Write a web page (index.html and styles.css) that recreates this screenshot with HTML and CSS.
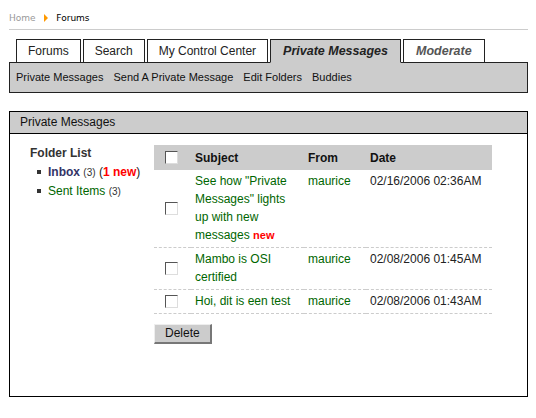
FILE: index.html
```html
<!DOCTYPE html>
<html lang="en">

<head>
    <meta charset="UTF-8">
    <title>Forums - Private Messages</title>
    <link rel="stylesheet" href="styles.css">
</head>

<body>
    <div class="page">
        <div class="crumbs">
            <a href="#" class="crumb-home">Home</a>
            <span class="crumb-arrow"></span>
            <span class="crumb-here">Forums</span>
        </div>

        <ul class="tabs">
            <li>Forums</li>
            <li>Search</li>
            <li>My Control Center</li>
            <li class="active">Private Messages</li>
            <li class="special">Moderate</li>
        </ul>
        <div class="subnav">
            <a href="#">Private Messages</a>
            <a href="#">Send A Private Message</a>
            <a href="#">Edit Folders</a>
            <a href="#">Buddies</a>
        </div>

        <div class="panel">
            <div class="panel-head">Private Messages</div>
            <div class="panel-body">
                <div class="folders">
                    <h1>Folder List</h1>
                    <ul>
                        <li><a href="#" class="unread">Inbox</a> <small>(3)</small> (<b class="hot">1 new</b>)</li>
                        <li><a href="#">Sent Items</a> <small>(3)</small></li>
                    </ul>
                </div>

                <div class="messages">
                    <table>
                        <colgroup>
                            <col style="width: 37px">
                            <col style="width: 113px">
                            <col style="width: 62px">
                            <col style="width: 126px">
                        </colgroup>
                        <tr>
                            <th class="check"><input type="checkbox"></th>
                            <th>Subject</th>
                            <th>From</th>
                            <th>Date</th>
                        </tr>
                        <tr>
                            <td class="check"><input type="checkbox"></td>
                            <td><a href="#">See how "Private Messages" lights up with new messages</a> <b class="new">new</b></td>
                            <td><a href="#">maurice</a></td>
                            <td>02/16/2006 02:36AM</td>
                        </tr>
                        <tr>
                            <td class="check"><input type="checkbox"></td>
                            <td><a href="#">Mambo is OSI certified</a></td>
                            <td><a href="#">maurice</a></td>
                            <td>02/08/2006 01:45AM</td>
                        </tr>
                        <tr>
                            <td class="check"><input type="checkbox"></td>
                            <td><a href="#">Hoi, dit is een test</a></td>
                            <td><a href="#">maurice</a></td>
                            <td>02/08/2006 01:43AM</td>
                        </tr>
                    </table>
                    <button type="button" class="btn">Delete</button>
                </div>
            </div>
        </div>
    </div>
</body>

</html>
```

FILE: styles.css
```css
ul,
li,
h1 {
    padding: 0;
    margin: 0;
    list-style: none
}

body {
    margin: 0;
    background: #fff;
    color: #222;
    font-family: "Liberation Sans", Arial, sans-serif;
    font-size: 12px;
}

a {
    text-decoration: none;
    color: #006600;
}

.page {
    padding: 0 8px 0 9px;
}

/* breadcrumb */
.crumbs {
    padding: 11px 0 4px;
    line-height: 14px;
    font-family: "DejaVu Sans", Verdana, sans-serif;
    font-size: 9px;
    border-bottom: 1px solid #ccc;
    margin-bottom: 9px;
}

.crumb-home {
    color: #999;
}

.crumb-arrow {
    display: inline-block;
    width: 0;
    height: 0;
    margin: 0 5px 0 6px;
    border-left: 4px solid #f90;
    border-top: 4px solid transparent;
    border-bottom: 4px solid transparent;
    vertical-align: -1px;
}

.crumb-here {
    color: #000;
}

/* tabs */
.tabs {
    display: flex;
    gap: 2px;
    margin-left: 7px;
    margin-bottom: -1px;
    position: relative;
    z-index: 1;
}

.tabs li {
    border: 1px solid #222;
    background: #fff;
    padding: 0 11px;
    line-height: 22px;
    color: #222;
}

.tabs li.active,
.tabs li.special {
    font-weight: bold;
    font-style: italic;
    font-size: 12.5px;
    padding: 0 12px;
}

.tabs li.active {
    background: #ccc;
    border-bottom-color: #ccc;
}

.tabs li.special {
    color: #555;
}

.subnav {
    display: flex;
    background: #ccc;
    border: 1px solid #222;
    padding-left: 1px;
    line-height: 29px;
    font-size: 11px;
}

.subnav a {
    color: #111;
    padding: 0 5px;
}

/* panel */
.panel {
    margin-top: 18px;
    border: 1px solid #000;
}

.panel-head {
    background: #ccc;
    border-bottom: 1px solid #000;
    line-height: 21px;
    padding-left: 10px;
    color: #111;
}

.panel-body {
    display: flex;
    padding: 11px 0 52px;
}

.folders {
    width: 124px;
    padding-left: 20px;
}

.folders h1 {
    font-size: 12px;
    line-height: 16px;
    margin-bottom: 2px;
    color: #333;
}

.folders ul {
    padding-left: 7px;
}

.folders li {
    line-height: 18px;
}

.folders li::before {
    content: "";
    display: inline-block;
    width: 4px;
    height: 4px;
    background: #333;
    margin-right: 7px;
    vertical-align: 2px;
}

.folders .unread {
    color: #333366;
    font-weight: bold;
}

.folders small {
    font-size: 10px;
    color: #333;
}

.hot {
    color: #f00;
}

/* message list */
.messages table {
    width: 338px;
    table-layout: fixed;
    border-collapse: collapse;
}

.messages th {
    background: #ccc;
    height: 25px;
    padding: 0 4px;
    text-align: left;
    color: #111;
}

.messages td {
    padding: 2px 4px 3px;
    line-height: 18px;
    vertical-align: top;
    border-bottom: 1px dashed #ccc;
}

.messages .check {
    padding-left: 11px;
    vertical-align: middle;
}

.messages input {
    -webkit-appearance: none;
    appearance: none;
    display: block;
    width: 13px;
    height: 13px;
    margin: 0;
    background: #fff;
    border: 1px solid;
    border-color: #555 #ddd #ddd #555;
}

.new {
    color: #f00;
    font-size: 11px;
}

.btn {
    margin-top: 10px;
    background: #ccc;
    font-family: "Liberation Sans", Arial, sans-serif;
    font-size: 12px;
    color: #111;
    line-height: 17px;
    padding: 0 10px;
    border-style: solid;
    border-width: 1px 2px 2px 1px;
    border-color: #eee #777 #777 #eee;
}
```
